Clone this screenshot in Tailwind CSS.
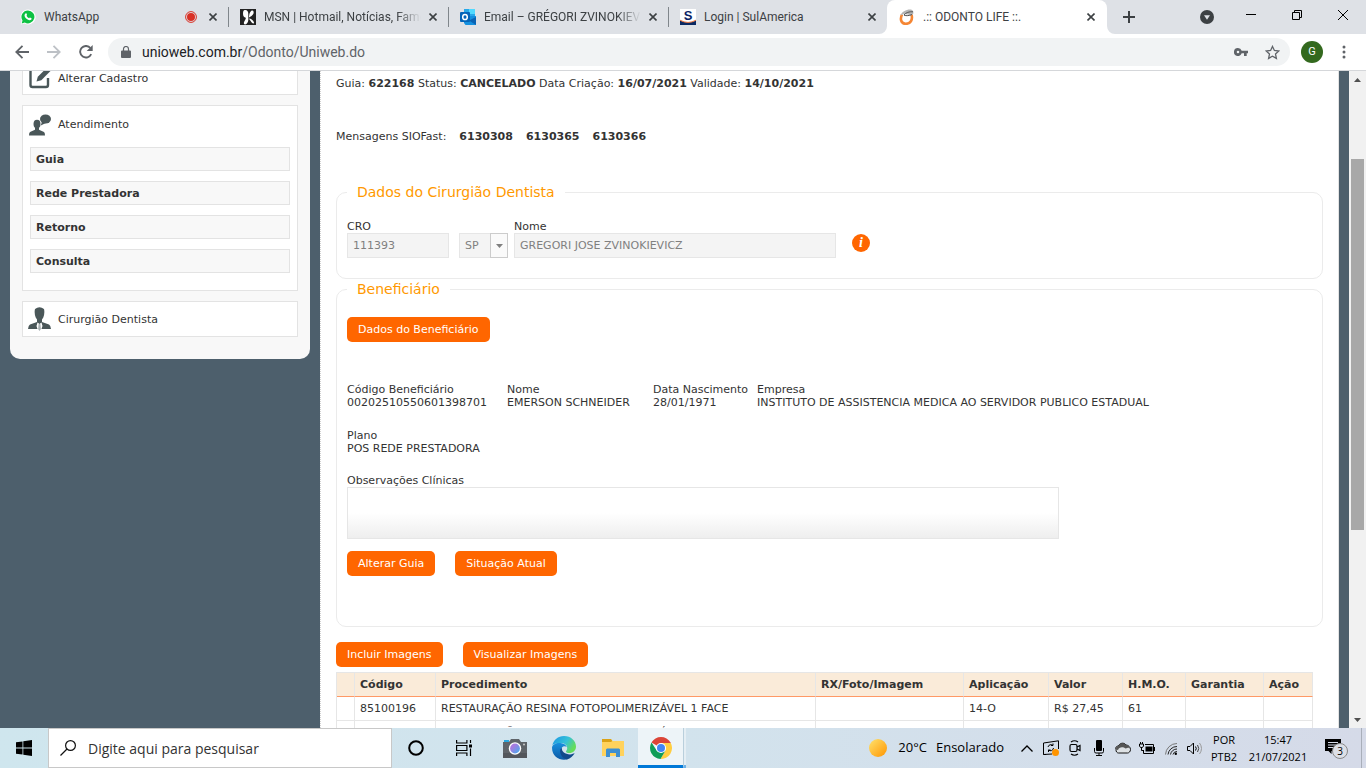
<!DOCTYPE html>
<html lang="pt-BR">
<head>
    <meta charset="UTF-8">
    <meta name="viewport" content="width=device-width, initial-scale=1.0">
    <title>.:: ODONTO LIFE ::.</title>
    <script src="https://cdn.jsdelivr.net/npm/@tailwindcss/browser@4"></script>
</head>
<body class="flex h-screen flex-col overflow-hidden bg-white font-['Open_Sans','Noto_Sans',sans-serif] text-[12px] text-[#3c4043]">

    <!-- Tab strip -->
    <header class="flex h-[34px] shrink-0 bg-[#dee1e6] pl-[9px] font-[Roboto,sans-serif]">
        <div class="flex w-[220px] items-center pl-[11px]">
            <svg class="size-4 shrink-0" viewBox="0 0 16 16">
                <path d="M8 .6a7.3 7.3 0 0 0-6.3 11L.7 15.4l3.9-1A7.4 7.4 0 1 0 8 .6z" fill="#fff"/>
                <path d="M8 1.4a6.5 6.5 0 0 0-5.5 10l-.8 3 3.1-.8A6.5 6.5 0 1 0 8 1.4z" fill="#0dc143"/>
                <path d="M5.5 4.5c.4-.4.8-.3 1 .1l.5 1.2c.1.3-.3.8-.5 1 .6 1.2 1.4 1.9 2.6 2.400.3-.2.6-.8.9-.7l1.400.7c.4.2.2 1-.1 1.300-.9.9-2.200.8-3.700 0-1.500-.8-2.700-2.200-3-3.500-.2-1 .2-1.900.9-2.500z" fill="#fff"/>
            </svg>
            <span class="ml-2 flex-1">WhatsApp</span>
            <svg class="size-3 shrink-0" viewBox="0 0 12 12"><circle cx="6" cy="6" r="5.400" fill="none" stroke="#d93025"/><circle cx="6" cy="6" r="4" fill="#d93025"/></svg>
            <button class="mr-2 ml-2 flex size-4 shrink-0 items-center justify-center" aria-label="Fechar">
                <svg class="size-2" viewBox="0 0 8 8" stroke="#3c4043" stroke-width="1.600"><path d="M.5.5l7 7M7.500.5l-7 7"/></svg>
            </button>
        </div>
        <span class="-ml-px h-5 w-px self-center bg-[#80868b]"></span>
        <div class="flex w-[220px] items-center pl-[11px]">
            <svg class="size-4 shrink-0" viewBox="0 0 16 16">
                <path d="M0 0h16v16H0z" fill="#222"/>
                <path d="M4.500 1C7 .5 8.600 2.500 8.300 5.500 8.200 8 8.500 9 8.300 11c-.2 2.500-1.500 4.300-3 4.500-1.600.1-1.800-1.500-1-3C5 11 6 10 5.800 8.800 4 8.300 3 7 3 4.500 3 2.500 3.500 1.300 4.500 1z" fill="#fff"/>
                <path d="M9 8.500C9 5.500 10 2 12 1.500c1.500-.2 2 1.500 1.500 3C12.800 6.500 10.500 7.500 9 8.500zM9 9.500c2 0 4.500 2 5 4 .1 1-1 1.300-1.800.5C11 12.800 9.800 11 9 9.500z" fill="#fff"/>
            </svg>
            <span class="ml-2 flex-1 overflow-hidden whitespace-nowrap [mask-image:linear-gradient(to_right,#000_calc(100%-24px),transparent)]">MSN | Hotmail, Notícias, Famosos</span>
            <button class="mr-2 ml-1 flex size-4 shrink-0 items-center justify-center" aria-label="Fechar">
                <svg class="size-2" viewBox="0 0 8 8" stroke="#3c4043" stroke-width="1.600"><path d="M.5.5l7 7M7.500.5l-7 7"/></svg>
            </button>
        </div>
        <span class="-ml-px h-5 w-px self-center bg-[#80868b]"></span>
        <div class="flex w-[220px] items-center pl-[11px]">
            <svg class="size-4 shrink-0" viewBox="0 0 16 16">
                <path d="M4 0h11v8H4z" fill="#28a8ea"/><path d="M9 0h6v5H9z" fill="#50d9ff"/>
                <path d="M4 7h12v9H5.500L4 14z" fill="#1490df"/><path d="M16 8v8L9 11.500z" fill="#0a63b4"/>
                <rect y="3" width="10" height="10" rx="1" fill="#0364b8"/>
                <ellipse cx="5" cy="8" rx="2.300" ry="2.600" fill="none" stroke="#fff" stroke-width="1.500"/>
            </svg>
            <span class="ml-2 flex-1 overflow-hidden whitespace-nowrap [mask-image:linear-gradient(to_right,#000_calc(100%-24px),transparent)]">Email – GRÉGORI ZVINOKIEVICZ</span>
            <button class="mr-2 ml-1 flex size-4 shrink-0 items-center justify-center" aria-label="Fechar">
                <svg class="size-2" viewBox="0 0 8 8" stroke="#3c4043" stroke-width="1.600"><path d="M.5.5l7 7M7.500.5l-7 7"/></svg>
            </button>
        </div>
        <span class="-ml-px h-5 w-px self-center bg-[#80868b]"></span>
        <div class="flex w-[218px] items-center pl-[11px]">
            <span class="relative flex size-4 shrink-0 justify-center overflow-hidden bg-white font-['Liberation_Sans',sans-serif] text-[13px] leading-[13px] font-bold text-[#0b2265]">S
                <svg class="absolute inset-0 size-4" viewBox="0 0 16 16"><path d="M0 11.500q8 4 16 0V16H0z" fill="#0b2a63"/><path d="M0 11.200q8 4.500 16 0" fill="none" stroke="#e8733a"/></svg>
            </span>
            <span class="ml-2 flex-1">Login | SulAmerica</span>
            <button class="mr-[7px] ml-1 flex size-4 shrink-0 items-center justify-center" aria-label="Fechar">
                <svg class="size-2" viewBox="0 0 8 8" stroke="#3c4043" stroke-width="1.600"><path d="M.5.5l7 7M7.500.5l-7 7"/></svg>
            </button>
        </div>
        <div class="relative flex w-[220px] items-center rounded-t-lg bg-white pl-3">
            <svg class="absolute bottom-0 -left-2 size-2" viewBox="0 0 8 8"><path d="M8 0v8H0a8 8 0 0 0 8-8z" fill="#fff"/></svg>
            <svg class="absolute -right-2 bottom-0 size-2" viewBox="0 0 8 8"><path d="M0 0v8h8a8 8 0 0 1-8-8z" fill="#fff"/></svg>
            <svg class="size-4 shrink-0" viewBox="0 0 16 16" fill="none">
                <path d="M3 5.500C.8 10 2 14.500 6.500 14.800c5 .2 7.500-4 6-9.300" stroke="#f58634" stroke-width="2.600"/>
                <path d="M1.500 6.500C2.500 3 7 .5 11 .5c2.500 0 4 1.500 3.200 4.500L12 6.500 9 5.500 5 5z" fill="#b5b5b5"/>
                <path d="M5 6c2-2.500 5-3.500 9-3.200M5 6.200c2.500.8 5 .6 8-.7" stroke="#555"/>
            </svg>
            <span class="ml-2 flex-1">.:: ODONTO LIFE ::.</span>
            <button class="mr-2 ml-1 flex size-4 shrink-0 items-center justify-center" aria-label="Fechar">
                <svg class="size-2" viewBox="0 0 8 8" stroke="#3c4043" stroke-width="1.600"><path d="M.5.5l7 7M7.500.5l-7 7"/></svg>
            </button>
        </div>
        <button class="ml-2 flex w-7 items-center justify-center" aria-label="Nova guia">
            <svg class="size-3" viewBox="0 0 12 12" stroke="#3c4043" stroke-width="2"><path d="M6 0v12M0 6h12"/></svg>
        </button>
        <div class="ml-auto flex">
            <button class="flex w-7 items-center justify-center" aria-label="Pesquisar guias">
                <svg class="size-[14px]" viewBox="0 0 14 14"><circle cx="7" cy="7" r="7" fill="#3c4043"/><path d="M4 5.200h6L7 9.800z" fill="#dee1e6"/></svg>
            </button>
            <button class="ml-[7px] flex h-[29px] w-[46px] items-center justify-center" aria-label="Minimizar">
                <svg class="size-[10px]" viewBox="0 0 10 10" stroke="#000"><path d="M0 4.500h10"/></svg>
            </button>
            <button class="flex h-[29px] w-[46px] items-center justify-center" aria-label="Restaurar">
                <svg class="size-[10px]" viewBox="0 0 10 10" stroke="#000" fill="none"><path d="M.5 2.500h7v7h-7zM2.500 2.500v-2h7v7h-2"/></svg>
            </button>
            <button class="flex h-[29px] w-[46px] items-center justify-center" aria-label="Fechar janela">
                <svg class="size-[10px]" viewBox="0 0 10 10" stroke="#000"><path d="M0 0l10 10M10 0L0 10"/></svg>
            </button>
        </div>
    </header>

    <!-- Toolbar -->
    <nav class="flex h-[37px] shrink-0 items-center border-b border-[#d5d7da] bg-white pr-[14px] pl-[6px]">
        <button class="flex w-8 justify-center" aria-label="Voltar">
            <svg class="size-[14px]" viewBox="0 0 14 14" fill="none" stroke="#5f6368" stroke-width="1.800"><path d="M14 7H1.500M7.500.8L1.300 7l6.200 6.200"/></svg>
        </button>
        <button class="flex w-8 justify-center" aria-label="Avançar">
            <svg class="size-[14px]" viewBox="0 0 14 14" fill="none" stroke="#bdc1c6" stroke-width="1.800"><path d="M0 7h12.500M6.500.8L12.700 7l-6.200 6.200"/></svg>
        </button>
        <button class="flex w-8 justify-center" aria-label="Recarregar">
            <svg class="size-[14px]" viewBox="0 0 14 14"><path d="M12.200 9.200A5.800 5.800 0 1 1 11.400 3" fill="none" stroke="#5f6368" stroke-width="1.900"/><path d="M13.700 0v6H7.700z" fill="#5f6368"/></svg>
        </button>
        <div class="ml-[6px] flex h-7 flex-1 items-center rounded-full bg-[#f1f3f4] pr-[10px] pl-[13px]">
            <svg class="h-3 w-[10px]" viewBox="0 0 10 12"><path d="M1 4.500h8a1 1 0 0 1 1 1V11a1 1 0 0 1-1 1H1a1 1 0 0 1-1-1V5.500a1 1 0 0 1 1-1z" fill="#5f6368"/><path d="M2.500 5V3a2.500 2.500 0 0 1 5 0v2" fill="none" stroke="#5f6368" stroke-width="1.200"/></svg>
            <span class="ml-[11px] flex-1 font-[Roboto,sans-serif] text-[14px] text-[#5f6368]"><span class="text-[#202124]">unioweb.com.br</span>/Odonto/Uniweb.do</span>
            <svg class="h-2 w-[14px]" viewBox="0 0 14 8"><path d="M4 0a4 4 0 1 0 3.700 5.300H10V8h2.700V5.300H14V2.700H7.700A4 4 0 0 0 4 0zm0 2.700a1.300 1.300 0 1 1 0 2.600 1.300 1.300 0 0 1 0-2.600z" fill="#5f6368"/></svg>
            <svg class="ml-[17px] size-[15px]" viewBox="0 0 15 15"><path d="M7.500 1.400l1.900 4.100 4.400.5-3.300 3 .9 4.400-3.900-2.200-3.900 2.200.9-4.400-3.300-3 4.400-.5z" fill="none" stroke="#5f6368" stroke-width="1.300"/></svg>
        </div>
        <button class="ml-[11px] size-[22px] rounded-full bg-[#33691e] font-[Roboto,sans-serif] text-[11px] text-white">G</button>
        <button class="ml-3 flex w-[17px] justify-center" aria-label="Menu">
            <svg class="h-[14px] w-1" viewBox="0 0 4 14" fill="#5f6368"><circle cx="2" cy="2" r="1.500"/><circle cx="2" cy="7" r="1.500"/><circle cx="2" cy="12" r="1.500"/></svg>
        </button>
    </nav>

    <!-- Page -->
    <div class="flex min-h-0 flex-1 font-['DejaVu_Sans',Verdana,sans-serif] text-[11px] leading-[13px] text-[#333]">
        <div class="flex min-w-0 flex-1 overflow-hidden bg-[#4d5f6c] pr-[10px]">

            <aside class="ml-[10px] w-[300px] shrink-0 self-start rounded-b-[10px] bg-[#f8f8f8] px-3 pb-[22px]">
                <a href="#" class="-mt-[10px] flex h-[34px] items-center border border-[#e3e3e3] bg-white pl-[6px]">
                    <svg class="size-[22px]" viewBox="0 0 22 22"><path d="M13 2.500H3.500a2 2 0 0 0-2 2V18a2 2 0 0 0 2 2H17a2 2 0 0 0 2-2v-7" fill="none" stroke="#4a5759" stroke-width="2.400"/><path d="M7.500 14.500l1.300-4.700L18 .5 21.500 4l-9.200 9.200z" fill="#4a5759"/></svg>
                    <span class="ml-[7px]">Alterar Cadastro</span>
                </a>
                <section class="mt-[10px] border border-[#e3e3e3] bg-white px-[7px] pb-[17px]">
                    <h2 class="-ml-px flex h-[41px] items-center pb-1">
                        <svg class="size-[22px]" viewBox="0 0 22 22" fill="#4a5759"><ellipse cx="8" cy="10" rx="3.500" ry="4.300"/><path d="M6 13h4v2.800l5 2.200q1 .6 1 3.500H0q0-2.900 1-3.500l5-2.200z"/><ellipse cx="16.500" cy="5" rx="5.500" ry="4.500"/><path d="M13 7.500l-1.200 4 5-2.500z"/></svg>
                        <span class="ml-[7px]">Atendimento</span>
                    </h2>
                    <ul class="space-y-[10px] font-bold">
                        <li><a href="#" class="flex h-6 items-center border border-[#e3e3e3] bg-[#f8f8f8] pl-[5px]">Guia</a></li>
                        <li><a href="#" class="flex h-6 items-center border border-[#e3e3e3] bg-[#f8f8f8] pl-[5px]">Rede Prestadora</a></li>
                        <li><a href="#" class="flex h-6 items-center border border-[#e3e3e3] bg-[#f8f8f8] pl-[5px]">Retorno</a></li>
                        <li><a href="#" class="flex h-6 items-center border border-[#e3e3e3] bg-[#f8f8f8] pl-[5px]">Consulta</a></li>
                    </ul>
                </section>
                <a href="#" class="mt-[10px] flex h-9 items-center border border-[#e3e3e3] bg-white pl-[5px]">
                    <svg class="h-6 w-[23px]" viewBox="0 0 23 24"><path d="M7 2Q11.500-1.500 16 2q1 4-.7 8.500l-1.300 2V15l7 2.500q1.500.8 2 4.500H0q.5-3.700 2-4.500L9 15v-2.500l-1.300-2Q6 6 7 2z" fill="#4a5759"/><path d="M9.500 15.500L11.500 17l2-1.500 1 3.500-1.700 5h-2.600l-1.700-5z" fill="#fff"/><path d="M10.600 17h1.800l.5 5-1.400 2-1.400-2z" fill="#aab2b4"/></svg>
                    <span class="ml-[7px]">Cirurgião Dentista</span>
                </a>
            </aside>

            <main class="ml-[10px] min-w-0 flex-1 border-x border-l-[#d0d0d0] border-r-[#e3e3e3] bg-white pt-[6px] pr-[15px] pl-[15px] [border-left-style:dotted]">
                <p>Guia: <b>622168</b> Status: <b>CANCELADO</b> Data Criação: <b>16/07/2021</b> Validade: <b>14/10/2021</b></p>
                <p class="mt-10 flex gap-[13px]">Mensagens SIOFast: <a href="#" class="font-bold">6130308</a> <a href="#" class="font-bold">6130365</a> <a href="#" class="font-bold">6130366</a></p>

                <fieldset class="mt-10 rounded-[10px] border border-[#ebebeb] px-[10px] pb-5">
                    <legend class="px-[10px] text-[14px] leading-[18px] text-[#ff9900]">Dados do Cirurgião Dentista</legend>
                    <div class="flex items-end pt-[19px]">
                        <div class="w-[102px]">
                            <label for="cro" class="block">CRO</label>
                            <input id="cro" value="111393" disabled class="block h-[25px] w-full border border-[#e6e6e6] bg-[#f4f4f4] px-[5px] text-[#808080]">
                        </div>
                        <div class="ml-[10px] flex h-[25px] w-[49px] border border-[#e6e6e6] bg-[#f4f4f4]">
                            <select aria-label="UF" disabled class="min-w-0 flex-1 appearance-none pl-[5px] text-[#808080] opacity-100"><option>SP</option></select>
                            <span class="-my-px -mr-px flex w-[18px] items-center justify-center border border-[#ccc] bg-[#fafafa]">
                                <svg class="h-1 w-[7px]" viewBox="0 0 7 4"><path d="M0 0h7L3.500 4z" fill="#808080"/></svg>
                            </span>
                        </div>
                        <div class="ml-[6px] w-[322px]">
                            <label for="nome" class="block">Nome</label>
                            <input id="nome" value="GREGORI JOSE ZVINOKIEVICZ" disabled class="block h-[25px] w-full border border-[#e6e6e6] bg-[#f4f4f4] px-[5px] text-[#808080]">
                        </div>
                        <button class="mb-[6px] ml-4 flex size-[18px] items-center justify-center rounded-full bg-[#ff6600] font-['Liberation_Serif',serif] text-[14px] leading-[18px] font-bold text-white italic" aria-label="Informações">i</button>
                    </div>
                </fieldset>

                <fieldset class="mt-px rounded-[10px] border border-[#ebebeb] px-[10px] pb-[50px]">
                    <legend class="px-[10px] text-[14px] leading-[18px] text-[#ff9900]">Beneficiário</legend>
                    <button class="mt-[19px] block h-[25px] rounded-[5px] bg-[#ff6600] px-[11px] text-white">Dados do Beneficiário</button>
                    <dl class="mt-[41px] flex whitespace-nowrap">
                        <div class="w-[160px]"><dt>Código Beneficiário</dt><dd>00202510550601398701</dd></div>
                        <div class="w-[146px]"><dt>Nome</dt><dd>EMERSON SCHNEIDER</dd></div>
                        <div class="w-[104px]"><dt>Data Nascimento</dt><dd>28/01/1971</dd></div>
                        <div><dt>Empresa</dt><dd>INSTITUTO DE ASSISTENCIA MEDICA AO SERVIDOR PUBLICO ESTADUAL</dd></div>
                    </dl>
                    <dl class="mt-5"><dt>Plano</dt><dd>POS REDE PRESTADORA</dd></dl>
                    <label for="obs" class="mt-[19px] block">Observações Clínicas</label>
                    <textarea id="obs" class="block h-[52px] w-[712px] resize-none border border-[#e6e6e6] bg-linear-to-b from-white from-50% to-[#eee]"></textarea>
                    <div class="mt-3 flex gap-5">
                        <button class="h-[25px] rounded-[5px] bg-[#ff6600] px-[11px] text-white">Alterar Guia</button>
                        <button class="h-[25px] rounded-[5px] bg-[#ff6600] px-[11px] text-white">Situação Atual</button>
                    </div>
                </fieldset>

                <div class="mt-[15px] flex gap-5">
                    <button class="h-[25px] rounded-[5px] bg-[#ff6600] px-[11px] text-white">Incluir Imagens</button>
                    <button class="h-[25px] rounded-[5px] bg-[#ff6600] px-[11px] text-white">Visualizar Imagens</button>
                </div>
                <div class="mt-[5px] pr-[10px]">
                    <table class="w-full table-fixed border-separate border-spacing-0 border-l border-[#e6e6e6] text-left [&_td]:border-r [&_td]:border-b [&_td]:border-[#e6e6e6] [&_td]:px-[5px] [&_th]:border-t [&_th]:border-r [&_th]:border-b [&_th]:border-t-[#e6e6e6] [&_th]:border-r-[#e6e6e6] [&_th]:border-b-[#ff9966] [&_th]:px-[5px]">
                        <colgroup>
                            <col class="w-[18px]"><col class="w-[81px]"><col><col class="w-[148px]"><col class="w-[85px]"><col class="w-[74px]"><col class="w-[63px]"><col class="w-[78px]"><col class="w-[49px]">
                        </colgroup>
                        <thead>
                            <tr class="h-[25px] bg-[#faebd9]">
                                <th></th><th>Código</th><th>Procedimento</th><th>RX/Foto/Imagem</th><th>Aplicação</th><th>Valor</th><th>H.M.O.</th><th>Garantia</th><th>Ação</th>
                            </tr>
                        </thead>
                        <tbody>
                            <tr class="h-6">
                                <td></td><td>85100196</td><td>RESTAURAÇÃO RESINA FOTOPOLIMERIZÁVEL 1 FACE</td><td></td><td>14-O</td><td>R$ 27,45</td><td>61</td><td></td><td></td>
                            </tr>
                            <tr class="h-6">
                                <td></td><td>85100196</td><td>RESTAURAÇÃO RESINA FOTOPOLIMERIZÁVEL 1 FACE</td><td></td><td></td><td></td><td></td><td></td><td></td>
                            </tr>
                        </tbody>
                    </table>
                </div>
            </main>
        </div>

        <!-- Scrollbar -->
        <div class="flex w-[17px] shrink-0 flex-col bg-[#f1f1f1] px-[2px]">
            <div class="flex h-[17px] items-center justify-center"><svg class="h-1 w-[7px]" viewBox="0 0 7 4"><path d="M0 4h7L3.500 0z" fill="#505050"/></svg></div>
            <div class="flex-[71]"></div>
            <div class="flex-[371] bg-[#a8a8a8]"></div>
            <div class="flex-[181]"></div>
            <div class="flex h-[17px] items-center justify-center"><svg class="h-1 w-[7px]" viewBox="0 0 7 4"><path d="M0 0h7L3.500 4z" fill="#505050"/></svg></div>
        </div>
    </div>

    <!-- Taskbar -->
    <footer class="flex h-10 shrink-0 bg-linear-to-r from-[#cfe6ee] via-[#d2e3ed] to-[#d5dae8] text-black">
        <button class="flex w-12 items-center justify-center" aria-label="Iniciar">
            <svg class="size-4" viewBox="0 0 16 16"><path d="M0 2.300L6.500 1.400v6.200H0zM7.300 1.300L16 0v7.600H7.300zM0 8.400h6.500v6.200L0 13.700zM7.300 8.400H16V16l-8.700-1.200z"/></svg>
        </button>
        <label class="flex w-[344px] items-center border border-[#c8c8c8] bg-white pl-[11px]">
            <svg class="size-4" viewBox="0 0 16 16" fill="none" stroke="#111" stroke-width="1.200"><circle cx="10.500" cy="5.500" r="4.900"/><path d="M7 9L.5 15.500"/></svg>
            <input type="text" aria-label="Pesquisar" placeholder="Digite aqui para pesquisar" class="ml-3 min-w-0 flex-1 text-[14px] outline-none placeholder:text-[#333]">
        </label>
        <button class="flex w-12 items-center justify-center" aria-label="Cortana">
            <svg class="size-4" viewBox="0 0 16 16"><circle cx="8" cy="8" r="6.800" fill="none" stroke="#000" stroke-width="2"/></svg>
        </button>
        <button class="flex w-12 items-center justify-center" aria-label="Visão de tarefas">
            <svg class="size-4" viewBox="0 0 16 16" fill="none" stroke="#000" stroke-width="1.200"><path d="M.6 0v3h10.300V0M.6 16v-3h10.300v3M.6 5.500h10.300v5H.6zM14.500 0v3M14.500 8.500V16"/><path d="M13 4.500h3v3h-3z" fill="#000" stroke="none"/></svg>
        </button>
        <button class="ml-[3px] flex w-12 items-center justify-center" aria-label="Câmera">
            <svg class="h-5 w-6" viewBox="0 0 24 20">
                <path d="M1 2h5v3H1z" fill="#2aa8e0"/><path d="M0 4h6l2-3h8l2 3h6v16H0z" fill="#5f6469"/><path d="M0 15h24v5H0z" fill="#53575c"/>
                <circle cx="12" cy="10.500" r="6.200" fill="#fff"/><circle cx="12" cy="10.500" r="4.900" fill="url(#lens)"/><circle cx="21" cy="6.500" r="1" fill="#ccc"/>
                <defs><linearGradient id="lens" x1="0" y1="0" x2="1" y2="1"><stop offset=".3" stop-color="#a77be0"/><stop offset="1" stop-color="#3bb0f0"/></linearGradient></defs>
            </svg>
        </button>
        <button class="flex w-[49px] items-center justify-center" aria-label="Edge">
            <svg class="size-6" viewBox="0 0 24 24">
                <defs>
                    <linearGradient id="eg" x1="0" y1="0" x2="1" y2=".5"><stop offset=".1" stop-color="#1d9be2"/><stop offset=".6" stop-color="#35c1d8"/><stop offset="1" stop-color="#66dd58"/></linearGradient>
                    <linearGradient id="eb" x1="0" y1="0" x2="0" y2="1"><stop stop-color="#1790df"/><stop offset="1" stop-color="#0c59a4"/></linearGradient>
                </defs>
                <path d="M.3 9.500C1.500 4 6 0 12 0c7 0 12 5 12 10.500 0 4-3 6.500-6.500 6.500-2.500 0-3.800-.9-3.500-1.800.8-1 1.200-1.700 1.200-3.200 0-3-3-5-6.700-5C4.500 7 1 8 .3 9.500z" fill="url(#eg)"/>
                <path d="M0 11.500C.5 8 4.500 6.500 8.500 7c3 .3 5.500 2 6.300 4-1-1-3.500-1.200-5 .8-2.200 3.200 0 9.400 6.700 11C10 25.500 0 22 0 11.500z" fill="url(#eb)"/>
                <path d="M9.800 11.800C6.500 13.500 8 22 15 23.400c3.500-1 6-3.500 7.500-6-.5-.6-1.500 1-4.500 1-5 0-8.500-2.800-8.200-6.600z" fill="#114a8b"/>
            </svg>
        </button>
        <button class="flex w-[49px] items-center justify-center" aria-label="Explorador de Arquivos">
            <svg class="h-[18px] w-[22px]" viewBox="0 0 22 18"><path d="M0 0h9l1.500 2H22v15H0z" fill="#ffd25c"/><path d="M0 0h9l1.300 2L9 3H0z" fill="#dba216"/><path d="M4 18v-7.500l1-1h12l1 1V18h-4v-4H8v4z" fill="#3d8fd1"/></svg>
        </button>
        <button class="ml-px flex w-[45px] items-center justify-center border-b-[3px] border-[#0078d7] bg-white/60" aria-label="Google Chrome">
            <svg class="mt-[3px] size-[22px]" viewBox="0 0 22 22">
                <path d="M11 11L1.500 5.500A11 11 0 0 1 20.500 5.500L21 6H11z" fill="#db4437"/>
                <path d="M11 6h9.800A11 11 0 0 1 10.500 22l5-8.400z" fill="#ffcd40"/>
                <path d="M1.500 5.500A11 11 0 0 0 10.500 22l5-8.500H6.700z" fill="#0f9d58"/>
                <circle cx="11" cy="11" r="5.100" fill="#fff"/><circle cx="11" cy="11" r="4" fill="#4285f4"/>
            </svg>
        </button>
        <span class="w-[3px] border-b-[3px] border-l border-b-[#6cb1e8] border-l-[#b9cfdc] bg-white/40"></span>

        <div class="ml-auto flex items-center">
            <button class="mr-[11px] flex items-center text-[13px]">
                <svg class="size-[18px]" viewBox="0 0 18 18"><defs><linearGradient id="sun" x1="0" y1="0" x2="1" y2="1"><stop stop-color="#ffe36e"/><stop offset="1" stop-color="#ff9500"/></linearGradient></defs><circle cx="9" cy="9" r="9" fill="url(#sun)"/></svg>
                <span class="ml-[11px]">20°C</span><span class="ml-[9px]">Ensolarado</span>
            </button>
            <span class="flex w-6 justify-center"><svg class="h-[7px] w-3" viewBox="0 0 12 7" fill="none" stroke="#000" stroke-width="1.300"><path d="M.5 6.500L6 1l5.500 5.500"/></svg></span>
            <span class="flex w-6 justify-center"><svg class="size-4" viewBox="0 0 16 16" fill="none" stroke="#000"><path d="M9 14l-8.500.5V3L15.500.8V9M.5 14.500H3"/><path d="M5 7a3 3 0 0 1 5-1.500V3.500M10 5.500H8M10.500 8a3 3 0 0 1-5 2V12M5.500 10h2"/><circle cx="12.500" cy="12.500" r="3.500" fill="#ff9500" stroke="none"/></svg></span>
            <span class="flex w-6 justify-center"><svg class="size-4" viewBox="0 0 16 16" fill="none" stroke="#000" stroke-width="1.200"><rect x="3" y="4.500" width="7" height="7" rx="1.500"/><path d="M10 7l3-1.500v5L10 9M4 2q3.500-2.500 7 0M4 14q3.500 2.500 7 0"/></svg></span>
            <span class="flex w-6 justify-center"><svg class="size-4" viewBox="0 0 16 16"><rect x="5" y="0" width="6" height="11" rx="1"/><path d="M3.500 8v3.500q0 1.500 1.500 1.500h6q1.500 0 1.500-1.500V8M8 13v2.500M5 15.500h6" fill="none" stroke="#000"/></svg></span>
            <span class="flex w-6 justify-center"><svg class="h-3 w-4" viewBox="0 0 16 12"><path d="M1 7.500C0 5 2 4 3.500 4 4.500 1 9 0 11 3c2 0 4.500 2 4.500 4.500 0 2-1.500 3.500-3 3.500h-9C2 11 .8 9.500 1 7.500z" fill="#dde1e4" stroke="#111"/><path d="M1 7.500C1 5 2 4 3.500 4 4.500 1 9 0 11 3c2 0 3.500 1.500 4 3-2-.5-2.500 0-4.500.6C8.500 4.500 4 4.500 3 8z" fill="#555"/></svg></span>
            <span class="flex w-6 justify-center"><svg class="h-3 w-4" viewBox="0 0 16 12"><path d="M6.500 4.500h7v5h-7z" fill="#000"/><path d="M6 2.500h8.500v9H4.500V8M15.500 5v4M1.500 0v2M3.500 0v2M2.500 5v3.500h2" fill="none" stroke="#000"/><path d="M.5 2h4v2l-1 1.500h-2L.5 4z" fill="#d5dfea" stroke="#000"/></svg></span>
            <span class="flex w-6 justify-center"><svg class="h-[13px] w-3" viewBox="0 0 12 13" fill="none" stroke="#222"><path d="M.5 12.500A11.500 11.500 0 0 1 12 1.500" stroke="#777"/><path d="M3 12.500A9 9 0 0 1 12 4.500M5.500 12.500A6.500 6.500 0 0 1 12 7M8 12.500a4 4 0 0 1 4-3"/><circle cx="10.800" cy="11.800" r="1.200" fill="#000" stroke="none"/></svg></span>
            <span class="flex w-6 justify-center"><svg class="h-[13px] w-4" viewBox="0 0 16 13" fill="none" stroke="#000"><path d="M.5 4.500h2.500L6.500 1v11L3 8.500H.5zM8.500 4.500q1.500 2 0 4"/><path d="M10.500 3q2.500 3.500 0 7" stroke="#444"/><path d="M12.500 1q4 5.500 0 11" stroke="#999"/></svg></span>
            <span class="w-[34px] text-center text-[11px] leading-[17px]">POR<br>PTB2</span>
            <span class="w-[74px] text-center text-[11px] leading-[17px]">15:47<br>21/07/2021</span>
            <button class="relative flex w-[46px] justify-center" aria-label="Notificações">
                <svg class="mr-[10px] mb-1 h-[15px] w-4" viewBox="0 0 16 15"><path d="M0 0h16v12H6.500v3L3.500 12H0z"/><path d="M3 3.500h10M3 6h10M3 8.500h7" stroke="#d5dae8"/></svg>
                <span class="absolute top-1 left-[17px] size-4 rounded-full border border-[#888] bg-[#dcdfe6] text-[10px] leading-[14px]">3</span>
            </button>
            <span class="h-10 w-[5px] border-l border-[#a9afba]"></span>
        </div>
    </footer>
</body>
</html>
